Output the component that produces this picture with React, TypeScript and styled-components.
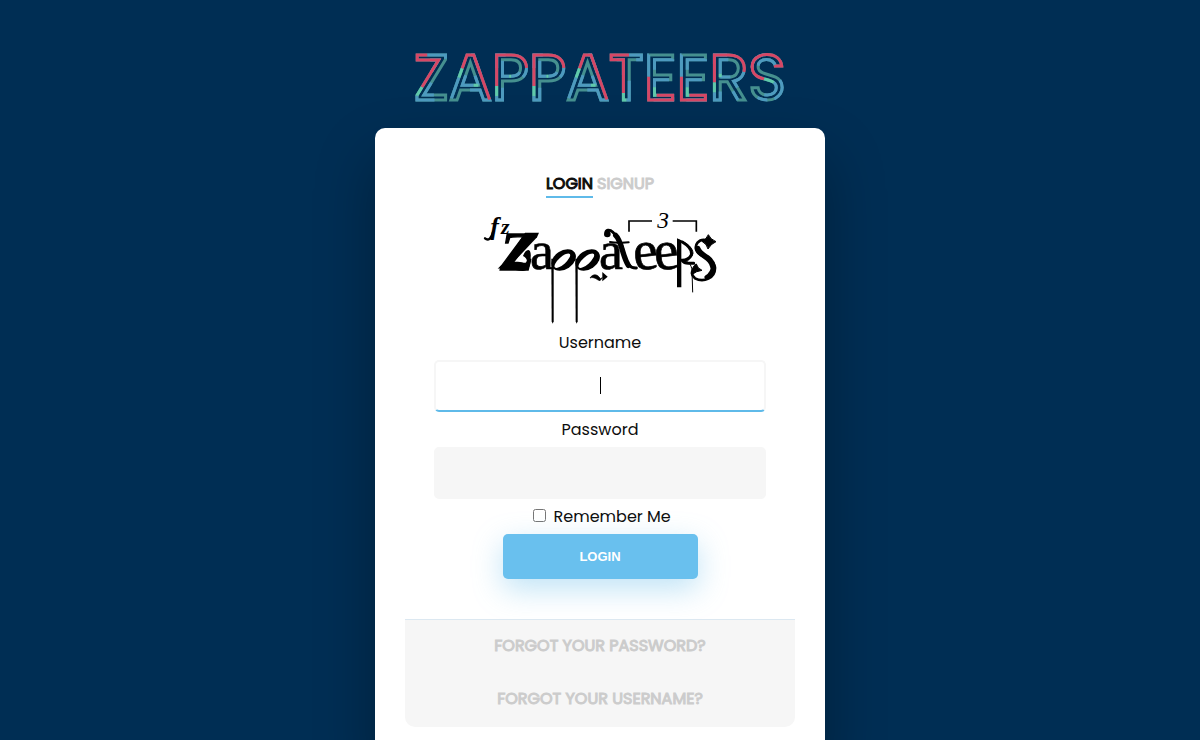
import React from "react";
import styled, { createGlobalStyle, css } from "styled-components";

const GlobalStyle = createGlobalStyle`
  * { box-sizing: border-box; }
  html { background: #002e54; scrollbar-width: none; }
  body {
    margin: 0;
    color: #0d0d0d;
    font-family: Poppins, Inter, sans-serif;
    font-size: 16px;
    line-height: 24px;
  }
`;

const Page = styled.main`
  display: flex;
  flex-direction: column;
  align-items: center;
  padding: 28px 20px 40px;
`;

const Brand = styled.h1`
  width: 100%;
  height: 100px;
  margin: 0;
  display: flex;
  justify-content: center;
`;

const BrandText = styled.text`
  font-family: Poppins, Lato, sans-serif;
  font-size: 64px;
  font-weight: 400;
  text-anchor: middle;
  fill: none;
  stroke-width: 3px;
`;

const Card = styled.section`
  width: 100%;
  max-width: 450px;
  padding: 44px 30px 30px;
  display: flex;
  flex-direction: column;
  align-items: center;
  background: #fff;
  border-radius: 10px;
  box-shadow: 0 30px 60px rgba(0, 0, 0, 0.3);
`;

const Tabs = styled.nav`
  display: flex;
  gap: 4px;
  margin-bottom: 6px;
`;

const capsLink = css`
  font-size: 16px;
  font-weight: 400;
  -webkit-text-stroke: 1px currentColor;
  text-transform: uppercase;
  text-decoration: none;
`;

const Tab = styled.a<{ $active?: boolean }>`
  ${capsLink}
  height: 26px;
  color: ${(p) => (p.$active ? "#0d0d0d" : "#ccc")};
  border-bottom: 2px solid ${(p) => (p.$active ? "#5fbae9" : "transparent")};
`;

const Form = styled.form`
  width: 85%;
  display: flex;
  flex-direction: column;
  align-items: center;
  margin: 7px 0 40px;
`;

const Label = styled.label``;

const Field = styled.input`
  width: 100%;
  height: 52px;
  margin: 5px 0 6px;
  padding: 15px 32px;
  border: 2px solid #f6f6f6;
  border-radius: 5px;
  background: #f6f6f6;
  color: #0d0d0d;
  font: 16px "Liberation Sans", sans-serif;
  text-align: center;
  outline: none;

  &:focus {
    background: #fff;
    border-bottom-color: #5fbae9;
  }

  &:focus:placeholder-shown {
    caret-color: transparent;
    background: linear-gradient(#000, #000) 50% 15px / 1px 17px no-repeat #fff;
  }
`;

const Remember = styled.div`
  text-align: center;
`;

const Submit = styled.button`
  width: 195px;
  height: 45px;
  margin-top: 5px;
  border: 0;
  border-radius: 5px;
  background: #69c0ee;
  color: #fff;
  font: bold 13px "Liberation Sans", sans-serif;
  text-transform: uppercase;
  box-shadow: 0 10px 30px rgba(95, 186, 233, 0.4);
`;

const Footer = styled.footer`
  width: 100%;
  display: flex;
  flex-direction: column;
  align-items: center;
  gap: 29px;
  padding: 14px 25px 16px;
  background: #f6f6f6;
  border-top: 1px solid #dce8f1;
  border-radius: 0 0 10px 10px;
`;

const FooterLink = styled.a`
  ${capsLink}
  color: #ccc;
`;

const strokes = [
  { colour: "#45908f", dash: "none", offset: 0 },
  { colour: "#4d9abf", dash: "22 28", offset: -138 },
  { colour: "#5fc9aa", dash: "10 168", offset: -60 },
  { colour: "#d64766", dash: "68 110", offset: -70 },
];

const Outline = () => (
  <svg width="400" height="100" viewBox="0 0 400 100" role="img" aria-label="Zappateers">
    {strokes.map((s) => (
      <BrandText key={s.colour} x="200" y="72" stroke={s.colour} strokeDasharray={s.dash} strokeDashoffset={s.offset}>
        ZAPPATEERS
      </BrandText>
    ))}
  </svg>
);

const Letter = styled.text`
  font-family: "Liberation Serif", serif;
  fill: #000;
  stroke: #000;
`;

const HalfNote = ({ x }: { x: number }) => (
  <g transform={`translate(${x} 0)`}>
    <ellipse cx="34" cy="180" rx="40" ry="28" transform="rotate(-34 34 180)" />
    <ellipse cx="30" cy="182" rx="30" ry="11" transform="rotate(-42 30 182)" fill="#fff" />
    <path d="M-3 176H4V364L1 371L-2 364Z" />
  </g>
);

const Logo = () => (
  <svg width="235" height="120" viewBox="24 12 705 360" role="img" aria-label="fz Zappateers">
    <Letter x="46" y="105" fontSize="78" fontWeight="700" fontStyle="italic" strokeWidth="0">f</Letter>
    <path d="M54 96C50 114 40 124 30 115" fill="none" stroke="#000" strokeWidth="7" strokeLinecap="round" />
    <Letter x="78" y="101" fontSize="66" fontWeight="700" fontStyle="italic" strokeWidth="0">z</Letter>
    <Letter x="76" y="209" fontSize="166" fontWeight="700" fontStyle="italic" strokeWidth="4">Z</Letter>
    <path d="M150 98H192L186 112L118 184L84 200Z" />
    <path d="M68 206C90 180 130 184 146 188C160 190 158 174 144 168C152 144 170 142 167 172C168 206 156 214 142 213C122 212 100 200 68 206Z" />
    <Letter x="165" y="208" fontSize="162" strokeWidth="2">a</Letter>
    <HalfNote x={232} />
    <HalfNote x={304} />
    <Letter x="372" y="207" fontSize="162" strokeWidth="2">a</Letter>
    <g fill="none" stroke="#000" strokeLinecap="round">
      <path d="M394 98C390 90 404 88 413 96C430 112 440 130 444 150C448 180 460 205 484 204" strokeWidth="9" />
      <path d="M422 106C441 124 441 166 460 196" strokeWidth="16" />
      <path d="M405 126C425 130 440 128 461 127" strokeWidth="6" />
    </g>
    <circle cx="397" cy="102" r="10" />
    <Letter x="475" y="208" fontSize="168" strokeWidth="2" transform="rotate(-6 510 170)">e</Letter>
    <Letter x="537" y="208" fontSize="168" strokeWidth="2" transform="rotate(-6 572 170)">e</Letter>
    <path d="M606 115L619 121V262H606Z" />
    <g fill="none" stroke="#000" strokeLinecap="round">
      <path d="M608 119C636 126 654 145 654 160C651 174 635 181 621 181C641 182 649 194 651 211L653 276" strokeWidth="3" />
      <path d="M622 126C642 138 652 151 649 165C643 178 632 181 621 181C632 196 643 187 656 190" strokeWidth="9" />
      <path d="M697 121C670 114 656 136 666 154C677 175 718 174 720 203C721 234 686 249 660 235C652 228 648 219 654 211" strokeWidth="8" />
      <path d="M668 146C675 170 709 168 713 198" strokeWidth="17" />
      <path d="M713 198C714 214 704 226 694 232" strokeWidth="12" />
    </g>
    <path d="M700 104Q706 118 723 125Q707 132 699 147Q696 132 681 124Q695 117 700 104Z" stroke="#000" strokeWidth="3" />
    <path d="M664 192Q668 206 681 211Q664 213 650 224Q650 199 664 192Z" stroke="#000" strokeWidth="3" />
    <path d="M345 234C354 220 368 222 376 236L382 233L375 242C365 240 358 229 345 234Z" stroke="#000" strokeWidth="2" />
    <path d="M382 216L398 230L382 244Z" />
    <path d="M462 95V63H531M593 63H664V95" fill="none" stroke="#000" strokeWidth="5" />
    <Letter x="547" y="83" fontSize="70" fontStyle="italic" strokeWidth="0">3</Letter>
  </svg>
);

export default function App() {
  return (
    <>
      <GlobalStyle />
      <Page>
        <Brand><Outline /></Brand>
        <Card>
          <Tabs>
            <Tab href="#login" $active>Login</Tab>
            <Tab href="#signup">Signup</Tab>
          </Tabs>
          <Logo />
          <Form>
            <Label htmlFor="username">Username</Label>
            <Field id="username" type="text" placeholder=" " autoFocus />
            <Label htmlFor="password">Password</Label>
            <Field id="password" type="password" />
            <Remember>
              <input id="remember" type="checkbox" />{" "}
              <Label htmlFor="remember">Remember Me</Label>
            </Remember>
            <Submit type="submit">Login</Submit>
          </Form>
          <Footer>
            <FooterLink href="#password">Forgot your password?</FooterLink>
            <FooterLink href="#username">Forgot your username?</FooterLink>
          </Footer>
        </Card>
      </Page>
    </>
  );
}
